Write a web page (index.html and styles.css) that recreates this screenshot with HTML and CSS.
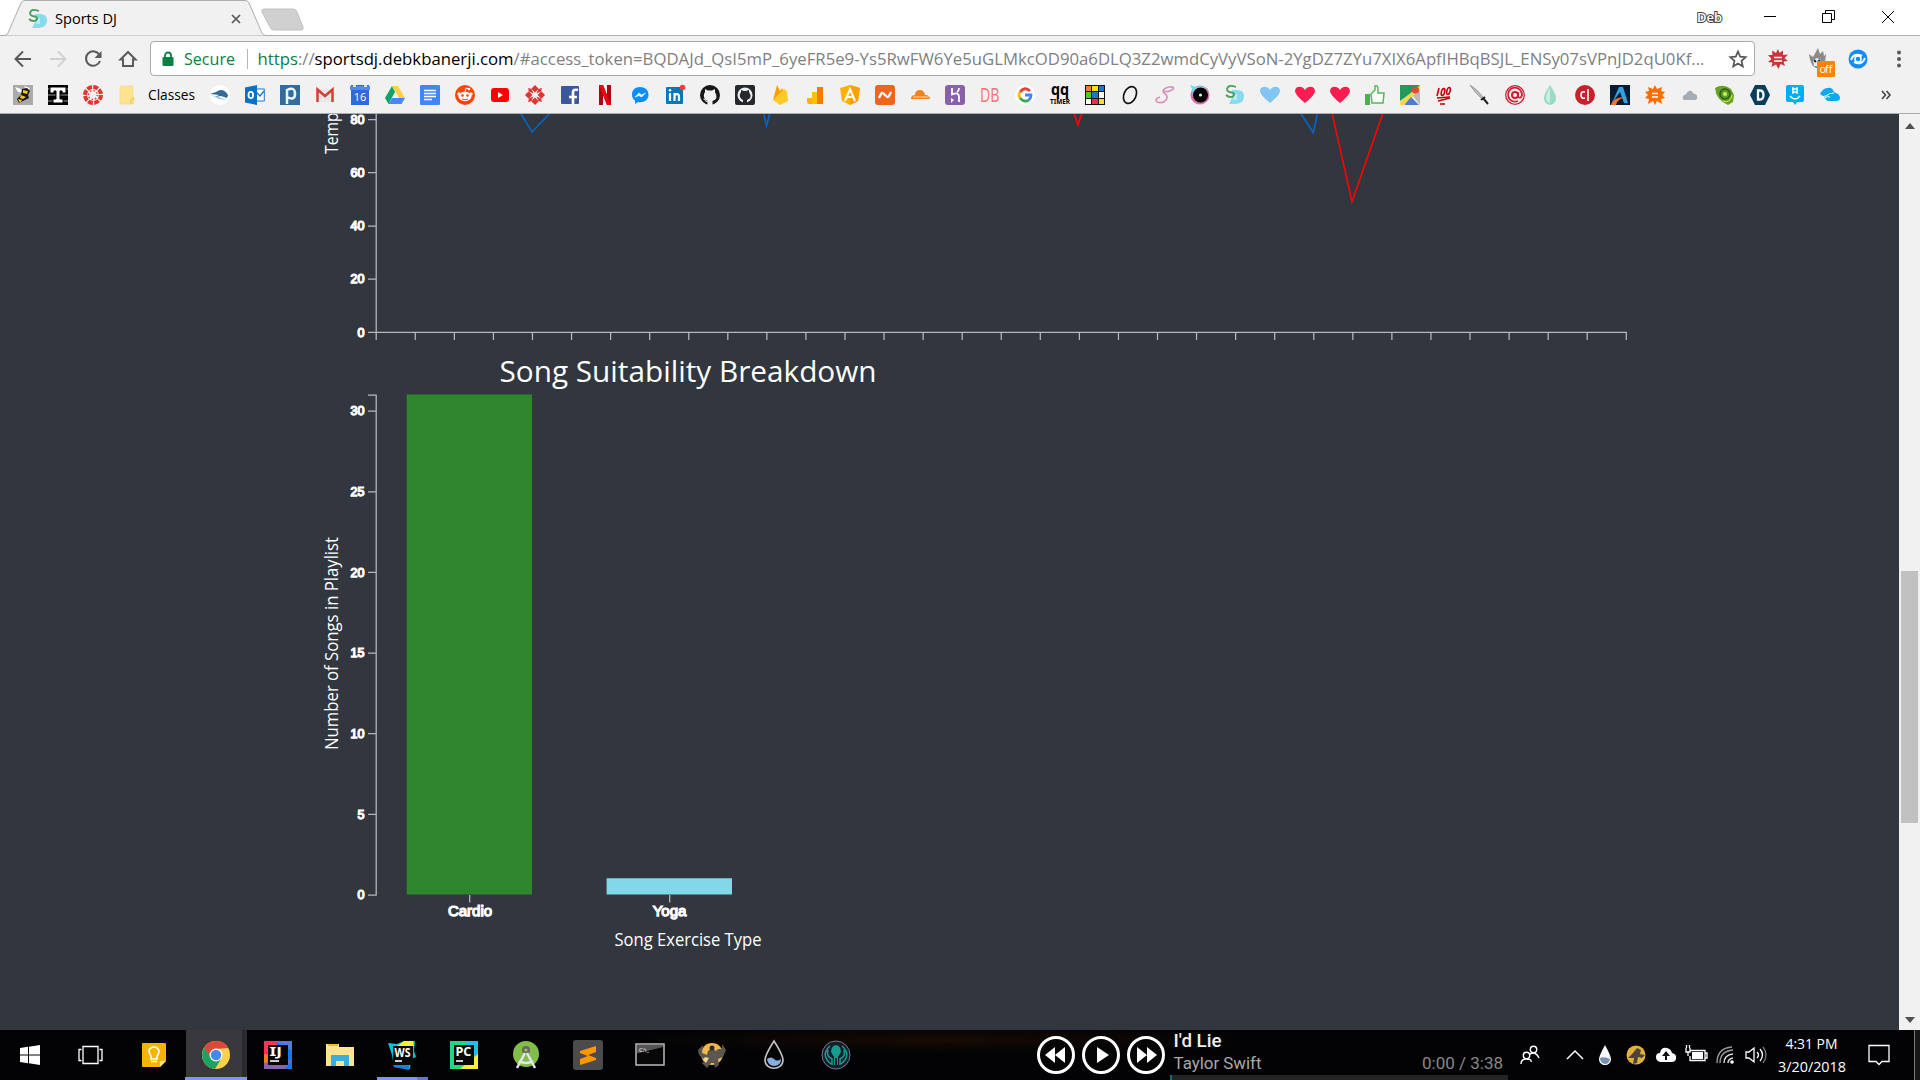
FILE: index.html
```html
<!DOCTYPE html>
<html lang="en">
<head>
<meta charset="utf-8">
<title>Sports DJ</title>
<link rel="stylesheet" href="styles.css">
</head>
<body>
<header class="tabstrip">
  <svg class="tab-shape" width="310" height="36" viewBox="0 0 310 36"><path d="M0 35.5H5Q7.500 35 8.500 32L21 3Q22 .5 25 .5H245Q248 .5 249 3L262 33Q263 35.500 266 35.500H310V36H0z" fill="#f1f1f1" stroke="#adadad"/><path d="M264 9H293Q296 9 297 12L303 27Q304 30 301 30H274Q271 30 270 27L262 12Q261 9 264 9z" fill="#d0d0d0" stroke="#c0c0c0"/></svg>
  <div class="tab">
    <svg width="20" height="20" viewBox="0 0 20 20"><path d="M7 5h5q7 0 7 6 0 8-9 8H4l3-6z" fill="#86dced"/><path d="M9 9h3v6H8z" fill="#b8ebf4"/><path d="M11 2Q3-1 2 4q0 3 5 3.500 4 1 1 4Q4 13 1 10" fill="none" stroke="#4b9f5b" stroke-width="1.800"/></svg>
    <svg class="txt" width="65" height="24"><text x="0" y="17" font-size="15" textLength="62" lengthAdjust="spacingAndGlyphs">Sports DJ</text></svg>
    <svg class="tab-close" width="12" height="12" viewBox="0 0 12 12"><path d="M2 2l8 8M10 2l-8 8" stroke="#555" stroke-width="1.700"/></svg>
  </div>
  <div class="window-controls">
    <svg width="30" height="20"><text class="user" x="2" y="15" textLength="25" lengthAdjust="spacingAndGlyphs">Deb</text></svg>
    <svg width="13" height="16" viewBox="0 0 13 16"><path d="M0 7.500h12" stroke="#000"/></svg>
    <svg width="14" height="16" viewBox="0 0 14 16"><path d="M.5 4.500h9v9h-9zM3.500 4V1.500h9v9H10" fill="none" stroke="#000"/></svg>
    <svg width="14" height="16" viewBox="0 0 14 16"><path d="M1 2l12 12M13 2L1 14" stroke="#000"/></svg>
  </div>
</header>

<nav class="toolbar">
  <svg width="18" height="18" viewBox="0 0 18 18"><path d="M17 9H2M9 1.500L1.500 9 9 16.500" fill="none" stroke="#5a5a5a" stroke-width="2"/></svg>
  <svg width="18" height="18" viewBox="0 0 18 18"><path d="M1 9h15M9 1.500L16.500 9 9 16.500" fill="none" stroke="#d0d0d0" stroke-width="2"/></svg>
  <svg width="18" height="18" viewBox="0 0 18 18"><path d="M15.500 5A7.200 7.200 0 1 0 16 11" fill="none" stroke="#5a5a5a" stroke-width="2"/><path d="M17.500 1v7h-7z" fill="#5a5a5a"/></svg>
  <svg width="18" height="18" viewBox="0 0 18 18"><path d="M1.500 9.500L9 2l7.500 7.500H14V16H4V9.500z" fill="none" stroke="#5a5a5a" stroke-width="2"/></svg>
  <div class="omnibox">
    <svg width="12" height="16" viewBox="0 0 12 16"><path d="M3 7V4.500a3 3 0 0 1 6 0V7" fill="none" stroke="#0b8043" stroke-width="1.800"/><rect x=".5" y="6" width="11" height="9" rx="1" fill="#0b8043"/></svg>
    <svg class="url" width="1535" height="32" font-size="17"><text x="11" y="22" fill="#0b8043" textLength="51" lengthAdjust="spacingAndGlyphs">Secure</text><path d="M74.500 6V26" stroke="#b5b5b5"/><text y="22" x="84.500" fill="#808080" textLength="1447" lengthAdjust="spacingAndGlyphs"><tspan fill="#0b8043">https</tspan>://<tspan fill="#000">sportsdj.debkbanerji.com</tspan>/#access_token=BQDAJd_QsI5mP_6yeFR5e9-Ys5RwFW6Ye5uGLMkcOD90a6DLQ3Z2wmdCyVyVSoN-2YgDZ7ZYu7XIX6ApfIHBqBSJL_ENSy07sVPnJD2qU0Kf...</text></svg>
    <svg class="star" width="18" height="18" viewBox="0 0 18 18"><path d="M9 1.500l2.200 5.200 5.500.5-4.200 3.700 1.300 5.600L9 13.500l-4.800 3 1.300-5.600L1.300 7.200l5.500-.5z" fill="none" stroke="#555" stroke-width="1.700"/></svg>
  </div>
  <div class="extensions">
    <svg width="20" height="20" viewBox="0 0 20 20"><path d="M10 0l1.500 4L15 1.500 15 6l5-.5L16.500 9l3.500 3-4.500.5L17 17l-4.500-2-2 5-2.500-4.500L3.500 18l1-4.500L0 13l3.500-3L0 6l4.500 0L4 1.500 8 4z" fill="#c9353a"/><path d="M6 8.500h8M6 12h8" stroke="#fff" stroke-width="1.500"/></svg>
    <svg width="26" height="30" viewBox="0 0 26 30"><path d="M9 0l2 6 3-3 1 5 2-2q-1 10-2 12-5 5-11 0Q1 14 0 6l4 3z" fill="#8b8b8b"/><path d="M4 12l4-2 4 2-1 6H5z" fill="#eee"/><path d="M5 12l2 2M11 12l-2 2" stroke="#222" stroke-width="2"/><rect x="8" y="13" width="18" height="16" rx="1" fill="#ff8200"/><text x="10.500" y="25" font-size="11" fill="#fff" textLength="13">off</text></svg>
    <svg width="20" height="20" viewBox="0 0 20 20"><circle cx="10" cy="10" r="9.500" fill="#128bff"/><path d="M3 11q3-8 11-4M17 9q-3 8-11 4" fill="none" stroke="#fff" stroke-width="2"/><circle cx="10" cy="10" r="3" fill="none" stroke="#fff" stroke-width="1.500"/></svg>
    <svg width="6" height="20" viewBox="0 0 6 20"><g fill="#5a5a5a"><circle cx="3" cy="3.500" r="2"/><circle cx="3" cy="10" r="2"/><circle cx="3" cy="16.500" r="2"/></g></svg>
  </div>
</nav>

<nav class="bookmarks">
  <svg viewBox="0 0 20 20"><path fill="#aaa" d="M0 0h20v20H0z"/><path d="M2 2l6 2 3 4-6-1zM11 1l6 2-3 3z" fill="#fff"/><path d="M9 4l5-1 3 3-2 4 1 3-4 2-6 3-2-4 4-4z" fill="#171717"/><path d="M10 5l5 1-1 3-4-1zM8 10l5 2-3 2-3-1zM5 14l4 1-2 3z" fill="#f1c620"/></svg>
  <svg viewBox="0 0 20 20"><path fill="#000" d="M0 0h20v20H0z"/><path d="M0 4h20M0 10h20M0 16h20" stroke="#999"/><path d="M2 2h16v6h-4V6h-2v8h3v4H5v-4h3V6H6v2H2z" fill="#fff" stroke="#000"/></svg>
  <svg viewBox="0 0 20 20"><circle cx="10" cy="10" r="8" fill="none" stroke="#e4342c" stroke-width="4" stroke-dasharray="5 1.280"/><circle cx="10" cy="10" r="4.400" fill="none" stroke="#e4342c" stroke-width="1.600" stroke-dasharray="1.200 2.250"/></svg>
  <svg viewBox="0 0 20 20"><path d="M3 1h11q1 0 1 2v8l1 1v6l-2 1H3q-1 0-1-1V2q0-1 1-1z" fill="#ffe391" stroke="#f3d37c" stroke-width=".6"/><path d="M13 19v-4l3-2" stroke="#e2bd58" fill="none"/></svg>
  <svg class="folder-name" viewBox="0 0 48 20"><text x="0" y="15" font-size="15" textLength="47" lengthAdjust="spacingAndGlyphs">Classes</text></svg>
  <svg viewBox="0 0 20 20"><circle cx="10" cy="10" r="10" fill="#fff"/><path d="M0 9l6-2q7-5 12 3l-1 3-6-2-6 1 4-2z" fill="#346a98"/><path d="M1 10l10 3 6 2-8-1z" fill="#98c4df"/></svg>
  <svg viewBox="0 0 20 20"><path d="M9 4h10.300v12H9z" fill="#fff" stroke="#1979ca"/><path d="M10 6l5 5 4-5" fill="none" stroke="#1979ca" stroke-width="1.500"/><path d="M0 2.500L12 0v20L0 17.500z" fill="#0872c4"/><ellipse cx="5.800" cy="10" rx="2.300" ry="3.200" fill="none" stroke="#fff" stroke-width="1.800"/></svg>
  <svg viewBox="0 0 20 20"><path fill="#336c9c" d="M0 0h20v20H0z"/><path d="M7 19V5q8-4 8 4 0 7-8 3" fill="none" stroke="#e8f7fd" stroke-width="2.500"/></svg>
  <svg viewBox="0 0 20 20"><path d="M1 4h18v13H1z" fill="#e8e8e8"/><path d="M2.500 17V4.500L10 11l7.500-6.500V17" fill="none" stroke="#d64034" stroke-width="2.500"/></svg>
  <svg viewBox="0 0 20 20"><path d="M1 0h18v20H1z" fill="#3169dc"/><path d="M0 1h20v4H0z" fill="#5289ef"/><path d="M3 0h3v2H3zM14 0h3v2h-3z" fill="#ddd"/><text x="10" y="16" text-anchor="middle" font-size="11" fill="#fff">16</text></svg>
  <svg viewBox="0 0 20 20"><path d="M7 1L0 13l3.500 6L10 7z" fill="#10a26a"/><path d="M7 1h6l7 12h-6z" fill="#ffcf45"/><path d="M3.500 19h13l3.500-6H7z" fill="#4688f4"/></svg>
  <svg viewBox="0 0 20 20"><rect width="20" height="20" rx="1" fill="#4285f4"/><path d="M4 5.500h12M4 8.500h12M4 11.500h12M4 14.500h8" stroke="#fff" stroke-width="1.500"/></svg>
  <svg viewBox="0 0 20 20"><circle cx="10" cy="10" r="10" fill="#ff4500"/><ellipse cx="10" cy="11.500" rx="6.500" ry="4.700" fill="#fff"/><circle cx="4" cy="9" r="1.700" fill="#fff"/><circle cx="16" cy="9" r="1.700" fill="#fff"/><path d="M10 7l1-4 3 1" stroke="#fff" fill="none"/><circle cx="14" cy="4" r="1.300" fill="#fff"/><circle cx="7.500" cy="10.500" r="1.300" fill="#ff4500"/><circle cx="12.500" cy="10.500" r="1.300" fill="#ff4500"/><path d="M7 14q3 1.500 6 0" stroke="#ff4500" fill="none"/></svg>
  <svg viewBox="0 0 20 20"><rect x="1" y="3" width="18" height="14" rx="3" fill="#f00"/><path d="M8 7l5 3-5 3z" fill="#fff"/></svg>
  <svg viewBox="0 0 20 20"><g fill="#e2332e"><path d="M10 0l3.700 3.700L10 7.400 6.300 3.700zM10 12.600l3.700 3.700L10 20l-3.700-3.700zM3.700 6.300L7.400 10l-3.700 3.700L0 10zM16.300 6.300L20 10l-3.700 3.700-3.700-3.700z"/><path d="M3 3l3.500 1 2 4.500L4 6.500zM17 3l-3.500 1-2 4.500L16 6.500zM3 17l3.500-1 2-4.500L4 13.500zM17 17l-3.500-1-2-4.500 4.500 2z"/></g></svg>
  <svg viewBox="0 0 20 20"><rect x="1" y="1" width="18" height="18" rx="1" fill="#3b579d"/><path d="M13 19v-8M9 12h8M13 12V7q0-3 5-2" fill="none" stroke="#fff" stroke-width="2.700"/></svg>
  <svg viewBox="0 0 20 20"><path d="M4 0h4l4 10V0h4v20h-4L8 10v10H4z" fill="#a90911"/><path d="M4 0h4l8 20h-4z" fill="#e50914"/></svg>
  <svg viewBox="0 0 20 20"><path d="M10 2C5 2 2 5 2 9.500q0 4 3 6V19l3-2c6 1 10.500-2 10.500-7.500C18.500 5 15 2 10 2z" fill="#0a8dff"/><path d="M5 12l4-4 2.500 2L15.500 8l-4 4L9 10.500z" fill="#fff" stroke="#fff" stroke-width=".6"/></svg>
  <svg viewBox="0 0 20 20"><rect x="1" y="2" width="17" height="17" rx="1" fill="#0777b5"/><path d="M5 8v8M9.500 16V8M9.500 12q0-3 2.500-3 2 0 2 3v4" fill="none" stroke="#fff" stroke-width="2.200"/><circle cx="5" cy="5.200" r="1.300" fill="#fff"/><circle cx="17.500" cy="2.500" r="2.800" fill="#f03e3e"/></svg>
  <svg viewBox="0 0 20 20"><circle cx="10" cy="10" r="10" fill="#181616"/><path d="M7.500 20v-4Q3 14 4 9l1-2V4l3 1.500h4L15 4v3q4 7-2.500 9v4" fill="#f1f1f1"/><path d="M3.500 14q2 0 2 2l2.500 1" fill="none" stroke="#f1f1f1"/></svg>
  <svg viewBox="0 0 20 20"><rect width="20" height="20" rx="2" fill="#24292e"/><circle cx="10" cy="10" r="7.500" fill="#eee"/><path d="M8 18v-3Q4 13 5 9l1-2V5l3 1h2l3-1v2q4 6-2 8v3" fill="#24292e"/></svg>
  <svg viewBox="0 0 20 20"><path d="M3 15L7 0l3 6 2-3 5 12-7 4z" fill="#ffa000"/><path d="M3 15L14 4l3 2 1 10-8 4z" fill="#ffca28"/></svg>
  <svg viewBox="0 0 20 20"><path d="M2 13h5v6H4q-2 0-2-2z" fill="#ffb300"/><path d="M7 7h6v12H7z" fill="#ffc000"/><path d="M12 2h6v17h-6z" fill="#f57c00"/></svg>
  <svg viewBox="0 0 20 20"><path d="M10 0l10 3-2 13-8 4-8-4L0 3z" fill="#ffb300"/><path d="M10 0l10 3-2 13-8 4z" fill="#ffa000"/><path d="M5 16l5-12 5 12M7 12h6" stroke="#fff" stroke-width="2" fill="none"/></svg>
  <svg viewBox="0 0 20 20"><rect width="20" height="20" rx="3" fill="#f0641e"/><path d="M4 13l2-4q1-2 3 0l2 2q2 2 3 0l2-4" fill="none" stroke="#fff" stroke-width="2.300"/></svg>
  <svg viewBox="0 0 20 20"><path d="M1 14q0-4 4-4 0-5 5-5 4 0 5 5 5 0 5 4z" fill="#f58220"/><path d="M3 12h12M14 12h5" stroke="#fbd2a5"/></svg>
  <svg viewBox="0 0 20 20"><rect width="20" height="20" rx="3" fill="#8861aa"/><path d="M7 3v6.500q7-3 7 2.500v5M14 3q0 3-2 4" fill="none" stroke="#fff" stroke-width="1.800"/><path d="M6 13l3 2-3 3z" fill="#fff"/></svg>
  <svg viewBox="0 0 20 20"><text x="0" y="17" font-size="20" fill="#f27474" textLength="19.500" lengthAdjust="spacingAndGlyphs">DB</text></svg>
  <svg viewBox="0 0 20 20"><circle cx="10" cy="10" r="10" fill="#fff"/><g fill="none" stroke-width="2.800"><path d="M5 7q5-6 10-1" stroke="#ea4335"/><path d="M5 7q-2 3 0 6" stroke="#fbbc05"/><path d="M5 13q4 5 9 2" stroke="#34a853"/><path d="M10 10h6q0 3-2 5" stroke="#4285f4"/></g></svg>
  <svg viewBox="0 0 20 20"><text class="heavy" x="1" y="10" font-size="16" textLength="18" lengthAdjust="spacingAndGlyphs">qq</text><text class="heavy" x="0" y="19" font-size="6.500" textLength="20" lengthAdjust="spacingAndGlyphs">TIMER</text></svg>
  <svg viewBox="0 0 20 20"><path fill="#111" d="M0 0h20v20H0z"/><path d="M1 1h5v5H1z" fill="#ff7840"/><path d="M7 1h6v5H7zM14 14h5v5h-5z" fill="#f9e21b"/><path d="M14 1h5v5h-5zM7 7h6v6H7z" fill="#1776cf"/><path d="M1 7h5v6H1z" fill="#4fcf1c"/><path d="M7 14h6v5H7z" fill="#e33"/><path d="M14 7h5v6h-5zM1 14h5v5H1z" fill="#fff"/></svg>
  <svg viewBox="0 0 20 20"><ellipse cx="10" cy="10" rx="6" ry="8.800" fill="none" stroke="#111" stroke-width="1.700" transform="rotate(25 10 10)"/></svg>
  <svg viewBox="0 0 20 20"><path d="M18 5q2-4-4-3-8 2-5 6 5 3 2 7-3 4-9 2-3-3 3-5M8 6q6 2 10-2" fill="none" stroke="#d990be" stroke-width="1.700"/></svg>
  <svg viewBox="0 0 20 20"><circle cx="10" cy="10" r="9.500" fill="#d76cae"/><path d="M2 4L0 0l6 2q7-3 12 3-5-4-10 0L3 12z" fill="#6cdaf3"/><circle cx="10.500" cy="10" r="7.500" fill="#000"/><circle cx="10.500" cy="10" r="1.600" fill="#cfe"/></svg>
  <svg viewBox="0 0 20 20"><path d="M7 5h5q7 0 7 6 0 8-9 8H4l3-6z" fill="#86dced"/><path d="M9 9h3v6H8z" fill="#b8ebf4"/><path d="M11 2Q3-1 2 4q0 3 5 3.500 4 1 1 4Q4 13 1 10" fill="none" stroke="#4b9f5b" stroke-width="1.800"/></svg>
  <svg viewBox="0 0 20 20"><path d="M10 18Q0 10 0 6c0-5 7-6 10-1 3-5 10-4 10 1q0 4-10 12z" fill="#82c5f2"/></svg>
  <svg viewBox="0 0 20 20"><path d="M10 18Q0 10 0 6c0-5 7-6 10-1 3-5 10-4 10 1q0 4-10 12z" fill="#fa1e50"/></svg>
  <svg viewBox="0 0 20 20"><path d="M10 18Q0 10 0 6c0-5 7-6 10-1 3-5 10-4 10 1q0 4-10 12z" fill="#fa1e50"/></svg>
  <svg viewBox="0 0 20 20"><path d="M6 9l4-4V1q3-1 3 3v4h6l-1 10H7z" fill="#f7fff7" stroke="#54b95a" stroke-width="1.500"/><path d="M0 9h5v11H0z" fill="#4caf50"/></svg>
  <svg viewBox="0 0 20 20"><path fill="#eee" d="M0 0h20v20H0z"/><path d="M0 0h20v2L0 16z" fill="#219a5b"/><path d="M0 17L20 0v5L4 20H0z" fill="#f9d54a"/><path d="M5 19l6-7 8 8H5z" fill="#4d7fce"/><path d="M13 11l7-6v15z" fill="#bbb"/><circle cx="15.500" cy="5" r="3.500" fill="#dd4b3e"/></svg>
  <svg viewBox="0 0 20 20"><g fill="none" stroke="#c3000c" stroke-width="1.600"><path d="M4 3L2 11M3 16l12-3"/><ellipse cx="8" cy="7" rx="1.600" ry="3.500" transform="rotate(15 8 7)"/><ellipse cx="13.500" cy="6" rx="1.600" ry="3.500" transform="rotate(15 14 6)"/><path d="M2 13l13-1M5 19h5" stroke-width="1.400"/></g></svg>
  <svg viewBox="0 0 20 20"><path d="M0 0q6 3 13 12l-1.500 1.500Q5 8 0 0z" fill="#bbb" stroke="#888" stroke-width=".7"/><path d="M13 13l5 6M11 15l4-3" stroke="#222" stroke-width="2"/></svg>
  <svg viewBox="0 0 20 20"><circle cx="10" cy="10" r="3" fill="none" stroke="#d51e32" stroke-width="2"/><path d="M13 7v5q3 2 4-2a7 7 0 1 0-4 6" fill="none" stroke="#d51e32" stroke-width="1.800"/><circle cx="10" cy="10" r="9.300" fill="none" stroke="#d51e32" stroke-width="1.300"/></svg>
  <svg viewBox="0 0 20 20"><path d="M10 0q6 9 6 13c0 9-12 9-12 0q0-4 6-13z" fill="#9bdac5"/><path d="M10 2q-4 7-4 11 0 4 4 5z" fill="#c8eee0"/></svg>
  <svg viewBox="0 0 20 20"><circle cx="10" cy="10" r="10" fill="#c9202b"/><path d="M10 7q-4-1-4 3t4 3M13 4v12" fill="none" stroke="#fff" stroke-width="1.600"/></svg>
  <svg viewBox="0 0 20 20"><path fill="#061c32" d="M0 0h20v20H0z"/><path d="M2 18L9 2h4l5 16h-4L10 7" fill="#31a2e0"/><path d="M1 20q2-9 18-8Q8 12 6 20z" fill="#f47332"/></svg>
  <svg viewBox="0 0 20 20"><path d="M10 0l2 4 5-2-1 4 4 1-3 3 3 3-4 1 1 5-5-3-2 4-2-4-5 3 1-5-4-1 3-3-3-3 4-1-1-4 5 2z" fill="#ff6d00"/><path d="M7 8.500h6M7 12h6" stroke="#fff" stroke-width="1.500"/></svg>
  <svg viewBox="0 0 20 20"><path d="M5 15q-3 0-2-4l3-2q4-7 8 0 4 0 3 5l-2 1z" fill="#a3adb5"/></svg>
  <svg viewBox="0 0 20 20"><path d="M0 3q8-5 16 1l3 6-1 7-5 3Q1 15 0 3z" fill="#69a325"/><ellipse cx="10" cy="9" rx="5" ry="5" fill="#5d9c20" stroke="#275d13" stroke-width="1.500"/><circle cx="10" cy="9" r="2" fill="#cbe76c"/><path d="M8 16q7 3 9-6" stroke="#d5ea56" fill="none"/></svg>
  <svg viewBox="0 0 20 20"><path d="M5 0h10l5 10-5 10H5L0 10z" fill="#073e59"/><path d="M8 5.500v9h2q3.500 0 3.500-4.500T10 5.500z" fill="none" stroke="#fff" stroke-width="2.300"/></svg>
  <svg viewBox="0 0 20 20"><path d="M3 0h14q2 0 2 2v13q0 2-2 2h-5l-2 3-2-3H3q-2 0-2-2V2q0-2 2-2z" fill="#00aff0"/><path d="M7 4h6M7 7h6M8 2v7M12 2v7M5 11q5 6 10 0" fill="none" stroke="#fff" stroke-width="1.300"/></svg>
  <svg viewBox="0 0 20 20"><path d="M3 11q-5-2-1-5 2-3 6-3 4-1 6 4 6 2 6 6 0 3-4 3H9q-3 0-4-3z" fill="#0aaaed"/><path d="M3 11.500l3-.5q3-3 8-3M5 13q2-2 5-1" stroke="#fff" fill="none"/></svg>
  <svg class="overflow" viewBox="0 0 20 20"><path d="M7 6l3.500 4L7 14M11.500 6l3.500 4-3.500 4" fill="none" stroke="#444" stroke-width="1.600"/></svg>
</nav>

<main class="viewport">
  <div class="page">
    <svg class="tempo-chart" width="1320" height="234" viewBox="310 114 1320 234">
      <g class="axis"><path d="M376.200 114V340M368 332.400H1626.300V340M368 119.500h8M368 172.700h8M368 226h8M368 279.200h8"/><path d="M415.300 333v7m39.060-7v7m39.070-7v7m39.060-7v7m39.060-7v7m39.070-7v7m39.060-7v7m39.060-7v7m39.070-7v7m39.060-7v7m39.060-7v7m39.070-7v7m39.060-7v7m39.060-7v7m39.070-7v7m39.060-7v7m39.060-7v7m39.070-7v7m39.060-7v7m39.060-7v7m39.070-7v7m39.060-7v7m39.060-7v7m39.070-7v7m39.060-7v7m39.060-7v7m39.070-7v7m39.060-7v7m39.060-7v7m39.070-7v7m39.060-7v7"/></g>
      <g class="ticks"><text x="364.500" y="124">80</text><text x="364.500" y="177">60</text><text x="364.500" y="230">40</text><text x="364.500" y="283">20</text><text x="364.500" y="336.700">0</text></g>
      <path class="line-blue" d="M520.500 113L532 132l18-19M763.500 113l3 12.500 3.500-12.500M1300.500 113l12.700 19.500 4.500-19.500"/>
      <path class="line-red" d="M1074 113l4 12 4-12M1332 113l20 88.500 31-88.500"/>
      <text class="label" transform="translate(337.500 154) rotate(-90)" textLength="51" lengthAdjust="spacingAndGlyphs">Tempo</text>
    </svg>
    <h2 class="chart-title"><svg width="380" height="44"><text x="-.5" y="33.500" textLength="377" lengthAdjust="spacingAndGlyphs">Song Suitability Breakdown</text></svg></h2>
    <svg class="bar-chart" width="500" height="568" viewBox="310 392 500 568">
      <path class="axis" d="M368 395H376.200V895H368M368 411h8M368 491.800h8M368 572.400h8M368 653h8M368 733.700h8M368 814.300h8M469.700 895v7.500M669.700 895v7.500"/>
      <path fill="#30852f" d="M406.700 394.500H532V894.500H406.700z"/>
      <path fill="#82d8e8" d="M606.600 878.300H732V894.500H606.600z"/>
      <g class="ticks"><text x="364.500" y="415">30</text><text x="364.500" y="496">25</text><text x="364.500" y="576.700">20</text><text x="364.500" y="657">15</text><text x="364.500" y="738">10</text><text x="364.500" y="818.500">5</text><text x="364.500" y="899">0</text></g>
      <g class="ticks categories"><text x="470" y="916">Cardio</text><text x="669.500" y="916">Yoga</text></g>
      <text class="label" x="614.500" y="945.500" textLength="147" lengthAdjust="spacingAndGlyphs">Song Exercise Type</text>
      <text class="label" transform="translate(338 750) rotate(-90)" textLength="213" lengthAdjust="spacingAndGlyphs">Number of Songs in Playlist</text>
    </svg>
  </div>
  <aside class="scrollbar">
    <svg width="10" height="6" viewBox="0 0 10 6"><path d="M0 6L5 0l5 6z" fill="#505050"/></svg>
    <div class="thumb"></div>
    <svg width="10" height="6" viewBox="0 0 10 6"><path d="M0 0l5 6 5-6z" fill="#505050"/></svg>
  </aside>
</main>

<footer class="taskbar">
  <div class="launchers">
    <div class="slot start"><svg viewBox="0 0 30 30"><path d="M5 8l8-1.200v7.700H5zM14 6.700L25 5v9.500H14zM5 15.500h8v7.700L5 22zM14 15.500h11V25l-11-1.700z" fill="#fff"/></svg></div>
    <div class="slot start"><svg viewBox="0 0 30 30"><path d="M6 6.500h15v17H6zM4.500 9.500H2v11h2.500M22.500 9.500H25v11h-2.500" fill="none" stroke="#fff" stroke-width="1.300"/></svg></div>
    <div class="slot"><svg viewBox="0 0 30 30"><path d="M4 3h22q1 0 1 1v17l-6 6H4q-1 0-1-1V4q0-1 1-1z" fill="#f5b400"/><path d="M21 27v-6h6z" fill="#ffe38a"/><path d="M12 19v-3q-4-6 0-8 3-2 6 0 4 3 0 8v3zM12 21.500h6" fill="none" stroke="#fff" stroke-width="1.600"/></svg></div>
    <div class="slot active"><svg viewBox="0 0 30 30"><circle cx="15" cy="15" r="14" fill="#ffd04c"/><path d="M3 8a14 14 0 0 1 24.500 0L15 9l-6 9z" fill="#dc493b"/><path d="M3 8a14 14 0 0 0 11 21l6-10-9-1z" fill="#1ca261"/><circle cx="15" cy="15" r="6.500" fill="#fff"/><circle cx="15" cy="15" r="5.200" fill="#4688f1"/></svg></div>
    <div class="slot"><svg viewBox="0 0 30 30"><path d="M1 1h28v28H1z" fill="#087cfa"/><path d="M1 1h14L5 29l-4-9z" fill="#fe315d"/><path d="M1 14l8 1-2 14H1z" fill="#f97a12"/><path d="M1 23l28-3-7 9H1z" fill="#8962b3"/><path d="M13 1h16v10z" fill="#537bd8"/><path d="M5 5h20v20H5z" fill="#050505"/><text class="heavy" x="6.500" y="16" font-size="12" fill="#fff" textLength="12.500" lengthAdjust="spacingAndGlyphs">IJ</text><path d="M7 21h9" stroke="#fff" stroke-width="1.600"/></svg></div>
    <div class="slot"><svg viewBox="0 0 30 30"><path d="M1 4h13v3h15v19H1z" fill="#ffe590"/><path d="M2 4h11v2H4z" fill="#f7bb1e"/><path d="M6 26V15h18v11h-5v-5h-8v5z" fill="#38aee5"/></svg></div>
    <div class="slot"><svg viewBox="0 0 30 30"><path d="M1 3l9 1 7-3h11l-1 10 2 6-5 2-1 10-16-2L5 15z" fill="#05c5dc"/><path d="M17 1h9l1 5-18 1z" fill="#f5f22d"/><path d="M6 24l16-2v8L7 27z" fill="#1582d6"/><path d="M6 6h20v19H6z" fill="#080808"/><text class="heavy" x="7.500" y="16.500" font-size="11.500" fill="#fff" textLength="16" lengthAdjust="spacingAndGlyphs">WS</text><path d="M8 21h7" stroke="#fff" stroke-width="1.600"/></svg></div>
    <div class="slot"><svg viewBox="0 0 30 30"><path d="M1 1h28v28H1z" fill="#20d788"/><path d="M16 1h13v14H21z" fill="#25bee8"/><path d="M29 14v15H11z" fill="#fdee3c"/><path d="M5 5h20v20H5z" fill="#080808"/><text class="heavy" x="6.500" y="16" font-size="12" fill="#fff" textLength="16" lengthAdjust="spacingAndGlyphs">PC</text><path d="M7 21h7" stroke="#fff" stroke-width="1.600"/></svg></div>
    <div class="slot"><svg viewBox="0 0 30 30"><circle cx="15" cy="14" r="13" fill="#83bd49"/><circle cx="15" cy="10" r="4" fill="#666"/><circle cx="15" cy="10" r="1.500" fill="#9ac66b"/><path d="M14 13L6 28M16 13l8 15M8 21q7 4 14 0" fill="none" stroke="#e2e6e7" stroke-width="2.500"/></svg></div>
    <div class="slot"><svg viewBox="0 0 30 30"><rect width="30" height="30" rx="3" fill="#4b4b4b"/><path d="M23 6v6l-8 3 8 3v2L7 25v-6l8-3-8-3v-2z" fill="#ff9800"/></svg></div>
    <div class="slot"><svg viewBox="0 0 30 30"><path d="M1 4h28v21H1z" fill="#080808" stroke="#bbb" stroke-width="1.500"/><path d="M2 5h26v2L4 13H2z" fill="#555"/><text x="4" y="12" font-size="6" fill="#fff">C:\_</text></svg></div>
    <div class="slot"><svg viewBox="0 0 30 30"><circle cx="15" cy="14" r="11" fill="#efb94c"/><path d="M1 10l5-5-1 8 5 2 1-4 4-3 4 3 2-2 4 0 0-5 4 6-3 7-5 2 1 6-4 3-1-5-3 0-4 5-5-5 3-3-6-5z" fill="#5b5650"/><circle cx="15" cy="8" r="2.500" fill="#302c29"/><path d="M8 17l4 1-3 5-3-3z" fill="#f6d68b"/></svg></div>
    <div class="slot"><svg viewBox="0 0 30 30"><path d="M15 1Q6 15 6 20c0 11 18 11 18 0q0-5-9-19z" fill="#050505" stroke="#c4c4c4" stroke-width="1.600"/><path d="M8 19q4-3 7 0t7 0q0 7-7 7-6 0-7-7z" fill="#88afe4"/></svg></div>
    <div class="slot"><svg viewBox="0 0 30 30"><circle cx="15" cy="15" r="14" fill="#171c2c" stroke="#777985"/><path d="M10 12q0-6 5-7 5 1 5 7l-3 5v8h-1v-7h-2v7h-1v-8z" fill="#169b8d"/><path d="M9 6q-10 9 1 18M21 6q10 9-1 18M7 10q-2 6 4 9v6M23 10q2 6-4 9v6" fill="none" stroke="#169b8d" stroke-width="1.600"/></svg></div>
  </div>
  <div class="media">
    <svg viewBox="0 0 38 38"><circle cx="19" cy="19" r="17.500" fill="#050505" stroke="#fff" stroke-width="3"/><path d="M8 19l10-8v16zM18 19l10-8v16z" fill="#fff"/></svg>
    <svg viewBox="0 0 38 38"><circle cx="19" cy="19" r="17.500" fill="#050505" stroke="#fff" stroke-width="3"/><path d="M15 11l12 8-12 8z" fill="#fff"/></svg>
    <svg viewBox="0 0 38 38"><circle cx="19" cy="19" r="17.500" fill="#050505" stroke="#fff" stroke-width="3"/><path d="M10 11l10 8-10 8zM20 11l10 8-10 8z" fill="#fff"/></svg>
  </div>
  <div class="track">
    <svg class="track-text" width="338" height="45"><text x="3.500" y="17" font-size="18" fill="#eee" font-weight="500" textLength="48" lengthAdjust="spacingAndGlyphs">I'd Lie</text><text x="3.500" y="39" font-size="17" fill="#a9a9a9" textLength="88" lengthAdjust="spacingAndGlyphs">Taylor Swift</text><text x="252" y="39" font-size="17" fill="#878787" textLength="81" lengthAdjust="spacingAndGlyphs">0:00 / 3:38</text></svg>
    <div class="progress"></div>
  </div>
  <div class="tray">
    <svg viewBox="0 0 24 24"><g fill="none" stroke="#fff" stroke-width="1.400"><circle cx="15.500" cy="6.500" r="3.200"/><circle cx="8.500" cy="12.500" r="3.200"/><path d="M3 21q0-5 5.500-5t4.500 3M12 11q6-3 9 4"/></g></svg>
    <svg class="caret" viewBox="0 0 24 24"><path d="M4 16l8-8 8 8" fill="none" stroke="#fff" stroke-width="1.500"/></svg>
    <svg viewBox="0 0 24 24"><path d="M12 2Q6 13 6 16c0 8 12 8 12 0q0-3-6-14z" fill="#f7f7f7"/><path d="M7 15q4-2 10 1-1 5-5 5-5-1-5-6z" fill="#7591af"/></svg>
    <svg viewBox="0 0 24 24"><circle cx="12" cy="12" r="9.500" fill="#e5b042"/><path d="M4 15l5-5 4-5 4 2-1 4 5 1-3 3-4-1-1 6-4 1 1-6z" fill="#4c4339"/></svg>
    <svg viewBox="0 0 24 24"><path d="M6 19q-4-1-4-5t4-4q1-6 7-5 4 1 5 5 5 1 4 6-1 3-4 3z" fill="#fff"/><path d="M12 8l4 5h-3v4h-2v-4H8z" fill="#111"/></svg>
    <svg viewBox="0 0 24 24"><path d="M5 7.500h15v10H5V13M20 10h2v5h-2M1 5v4h4V5M1.500 5V2M4.500 5V2M3 9v4" fill="none" stroke="#fff" stroke-width="1.300"/><path d="M7 9h11v7H7z" fill="#fff"/></svg>
    <svg viewBox="0 0 24 24"><g fill="none" stroke="#ddd" stroke-width="1.400"><path d="M13 20q0-4 5-5M9 20q0-8 9-9"/><path d="M5 20Q5 8 18 7M2 20Q2 5 17 4" stroke="#999"/></g><circle cx="17" cy="19" r="1.800" fill="#fff"/></svg>
    <svg viewBox="0 0 24 24"><g fill="none" stroke="#fff" stroke-width="1.300"><path d="M0 9h3l5-4v14l-5-4H0zM11 9q3 3 0 6M14 6q5 6 0 12"/><path d="M17 4q6 8 0 16" stroke="#777"/></g></svg>
    <svg class="clock" viewBox="0 0 72 50"><text x="7.500" y="19" textLength="52" lengthAdjust="spacingAndGlyphs">4:31 PM</text><text x="0" y="42" textLength="68" lengthAdjust="spacingAndGlyphs">3/20/2018</text></svg>
    <svg class="action" viewBox="0 0 24 24"><path d="M2 2.500h20v16H15l-3 3-3-3H2z" fill="none" stroke="#fff" stroke-width="1.300"/></svg>
  </div>
  <div class="show-desktop"></div>
</footer>
</body>
</html>
```

FILE: styles.css
```css
* { box-sizing: border-box; }
body { margin: 0; width: 1920px; height: 1080px; overflow: hidden; display: flex; flex-direction: column; background: #32363e; font-family: "Open Sans", "Noto Sans", sans-serif; }
svg { display: block; flex: none; overflow: visible; }
.heavy { font-family: "Noto Sans", sans-serif; font-weight: 700; }

.tabstrip { height: 36px; flex: none; display: flex; background: #fff; box-shadow: inset 0 -1px #adadad; }
.tab-shape { margin-right: -310px; }
.tab { position: relative; width: 310px; display: flex; align-items: center; padding: 2px 0 0 28px; gap: 7px; }
.tab-close { margin-left: 103px; }
.window-controls { display: flex; align-items: center; margin-left: auto; padding: 0 25px 3px 0; }
.window-controls svg:nth-child(2) { margin-left: 39px; }
.window-controls svg:nth-child(3) { margin-left: 45px; }
.window-controls svg:nth-child(4) { margin-left: 45px; }
.user { font-size: 13px; font-weight: 600; fill: #fff; stroke: #444; stroke-width: 2px; paint-order: stroke; }

.toolbar { height: 44px; flex: none; display: flex; align-items: center; gap: 17px; padding: 1px 0 0 14px; background: #f1f1f1; }
.toolbar > svg:nth-child(4) { margin-right: -4px; }
.omnibox { flex: none; width: 1605px; height: 35px; display: flex; align-items: center; padding: 0 6px 0 11px; border: 1px solid #aaa; border-radius: 4px; background: #fff; }
.star { margin-left: auto; margin-right: 1px; }
.url { margin-left: -1px; }
.extensions { display: flex; align-items: center; margin-left: -4px; gap: 20px; }
.extensions svg:nth-child(2) { margin: 8px -7px 0 1px; }
.extensions svg:nth-child(4) { margin-left: 8px; }

.bookmarks { height: 34px; flex: none; display: flex; align-items: flex-start; gap: 15px; padding: 5px 0 0 13px; background: #f1f1f1; border-bottom: 1px solid #ababab; }
.bookmarks svg { width: 20px; height: 20px; }
.bookmarks .folder-name { width: 48px; margin: 0 -1px 0 -5px; }
.bookmarks .overflow { margin-left: 20px; }

.viewport { height: 916px; flex: none; display: flex; }
.page { width: 1899px; padding-left: 310px; overflow: hidden; }
.axis { fill: none; stroke: #fff; stroke-opacity: .65; stroke-width: 1.25px; }
.ticks { font: 12.5px "Liberation Sans", sans-serif; fill: #fff; stroke: #fff; stroke-width: 1.25px; text-anchor: end; }
.categories { font-size: 15px; text-anchor: middle; }
.label { font-size: 18px; fill: #fff; }
.line-blue, .line-red { fill: none; stroke: #0565c9; stroke-width: 1.6px; }
.line-red { stroke: #f00; }
.chart-title { height: 44px; margin: 0 0 0 190px; font-size: 30px; font-weight: 400; fill: #fff; }
.scrollbar { width: 21px; padding: 9px 2px 7px; display: flex; flex-direction: column; align-items: center; background: #f1f1f1; }
.thumb { width: 17px; height: 252px; margin: 442px 0 auto; background: #c1c1c1; }

.taskbar { height: 50px; flex: none; display: flex; background: radial-gradient(ellipse at 49% 20%, #1b0c04 0, #0e0704 8%, #030305 24%), #030305; }
.launchers { display: flex; width: 1037px; }
.slot { width: 62px; padding: 10px 16px; }
.slot svg { width: 30px; height: 30px; }
.slot.start { width: 61.5px; padding-left: 15px; }
.slot.active { background: linear-gradient(#38383d, #38383d) 1px 0 / 56px 100% no-repeat, linear-gradient(#2b2b2f, #2b2b2f) 57px 0 / 5px 100% no-repeat; box-shadow: inset 0 -3px #8493f8; }
.slot:nth-child(7) { background: linear-gradient(#8493f8, #8493f8) 6px 47px / 40px 3px no-repeat, linear-gradient(#6674cf, #6674cf) 46px 47px / 11px 3px no-repeat; }
.media { display: flex; gap: 7px; padding: 6px 0 0; width: 133px; }
.media svg { width: 38px; height: 38px; }
.track { width: 338px; font-family: Roboto, sans-serif; }
.progress { height: 5px; border-left: 2px solid #0b716c; background: #242424; }
.tray { display: flex; padding: 13px 0 0 10px; gap: 6.5px; }
.tray svg { width: 24px; height: 24px; }
.tray .caret { margin: 0 0 0 14px; }
.tray .clock { width: 72px; height: 50px; margin: -13px 0 0 1.5px; fill: #fff; font-size: 15px; }
.tray .action { margin: 0 0 0 11px; }
.show-desktop { width: 6px; margin-left: auto; border-left: 1px solid #777; background: #171717; }
```
